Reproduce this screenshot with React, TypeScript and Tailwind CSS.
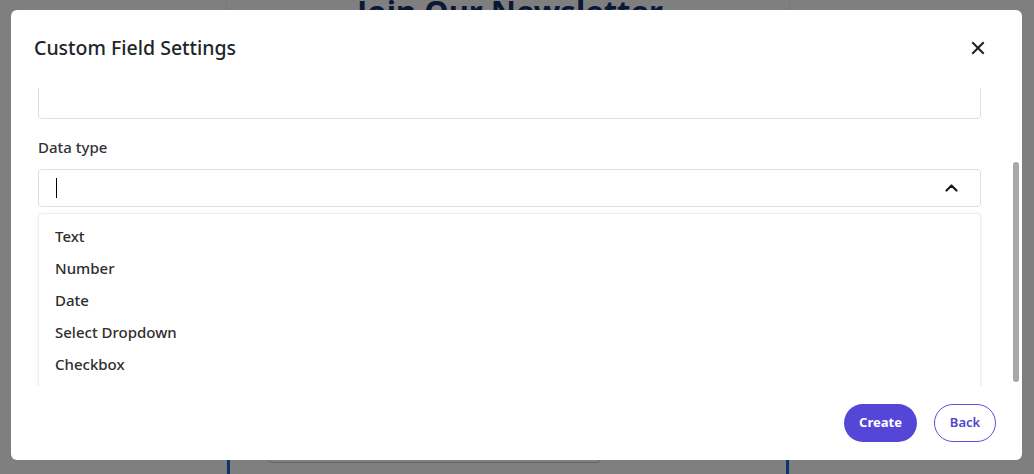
import { useLayoutEffect, useRef } from 'react';

const FONT = { fontFamily: '"Noto Sans", "Open Sans", Arial, sans-serif' };

const DATA_TYPES = ['Text', 'Number', 'Date', 'Select Dropdown', 'Checkbox', 'Multi Select'];

function CloseIcon() {
  return (
    <svg className="w-[14px] h-[14px]" viewBox="0 0 14 14" fill="none" stroke="#1f1f1f" strokeWidth={2} strokeLinecap="square">
      <path d="M2 2l10 10M12 2L2 12" />
    </svg>
  );
}

function ChevronUp() {
  return (
    <svg className="w-[13px] h-[8px]" viewBox="0 0 13 8" fill="none" stroke="#1b1b1b" strokeWidth={2.2} strokeLinecap="round" strokeLinejoin="round">
      <path d="M1.5 6.5L6.5 1.5l5 5" />
    </svg>
  );
}

function BackgroundPage() {
  return (
    <div className="h-full bg-white flex justify-center">
      <div className="ml-[-18px] w-[564px] h-full border-x border-[#f4f4f4] flex flex-col items-center">
        <h1 className="mt-[-8px] ml-[4px] text-[31px] font-bold text-[#14306e] leading-tight" style={FONT}>
          Join Our Newsletter
        </h1>
        <div className="mt-auto self-start w-[562px] h-[90px] border-x-[3px] border-[#1869d6]">
          <div className="ml-[36px] mt-[35px] w-[336px] h-[44px] rounded-md border border-[#c9c9c9]" />
        </div>
      </div>
    </div>
  );
}

export default function App() {
  const scrollRef = useRef<HTMLDivElement>(null);

  useLayoutEffect(() => {
    if (scrollRef.current) scrollRef.current.scrollTop = 100;
  }, []);

  return (
    <div className="relative w-[1034px] h-[474px] overflow-hidden" style={FONT}>
      <BackgroundPage />
      <div className="absolute inset-0 bg-black/50" />

      <div className="absolute left-[11px] top-[10px] w-[1011px] h-[450px] bg-white rounded-md flex flex-col">
        <div className="h-[78px] shrink-0 flex items-center justify-between pl-[23px] pr-[34px] pb-[2px]">
          <h2 className="text-[19.5px] font-medium text-[#212529]">Custom Field Settings</h2>
          <button className="w-5 h-5 flex items-center justify-center">
            <CloseIcon />
          </button>
        </div>

        <div className="relative h-[298px] shrink-0">
          <div
            ref={scrollRef}
            className="h-full overflow-y-scroll pl-[27px] pr-[41px] [scrollbar-width:none] [&::-webkit-scrollbar]:hidden"
          >
            <div className="pt-[61px]">
              <label className="block h-[22px] text-[15px] font-medium text-[#333]">Field name</label>
              <input className="mt-[10px] block w-full h-[38px] rounded border border-[#dedede] px-4 outline-none" />
            </div>

            <div className="mt-[17px]">
              <label className="block h-[22px] leading-[22px] text-[15px] font-medium text-[#333]">Data type</label>
              <div className="mt-[11px] h-[38px] rounded border border-[#dedede] flex items-center pl-[17px] pr-[22px]">
                <span className="w-px h-[20px] bg-black" />
                <span className="ml-auto flex items-center">
                  <ChevronUp />
                </span>
              </div>
              <ul className="mt-[6px] pt-[6px] pb-2 bg-white rounded border border-[#eeeeee] shadow-[0_1px_4px_rgba(0,0,0,0.07)]">
                {DATA_TYPES.map((t) => (
                  <li key={t} className="h-[32px] flex items-center px-[16px] text-[15px] font-medium text-[#2e2e2e]">
                    {t}
                  </li>
                ))}
              </ul>
            </div>
          </div>
          {/* scrollbar thumb */}
          <div className="absolute right-[3px] top-[74px] w-[6px] h-[220px] rounded-full bg-[#a8a8a8]" />
        </div>

        <div className="flex-1 flex items-center justify-end gap-[17px] pr-[26px] pb-[1px]">
          <button className="w-[73px] h-[38px] rounded-full bg-[#5546d8] text-white text-[13px] font-bold">
            Create
          </button>
          <button className="w-[62px] h-[38px] rounded-full border border-[#5b4fdc] text-[#4f44c9] text-[13px] font-semibold">
            Back
          </button>
        </div>
      </div>
    </div>
  );
}
